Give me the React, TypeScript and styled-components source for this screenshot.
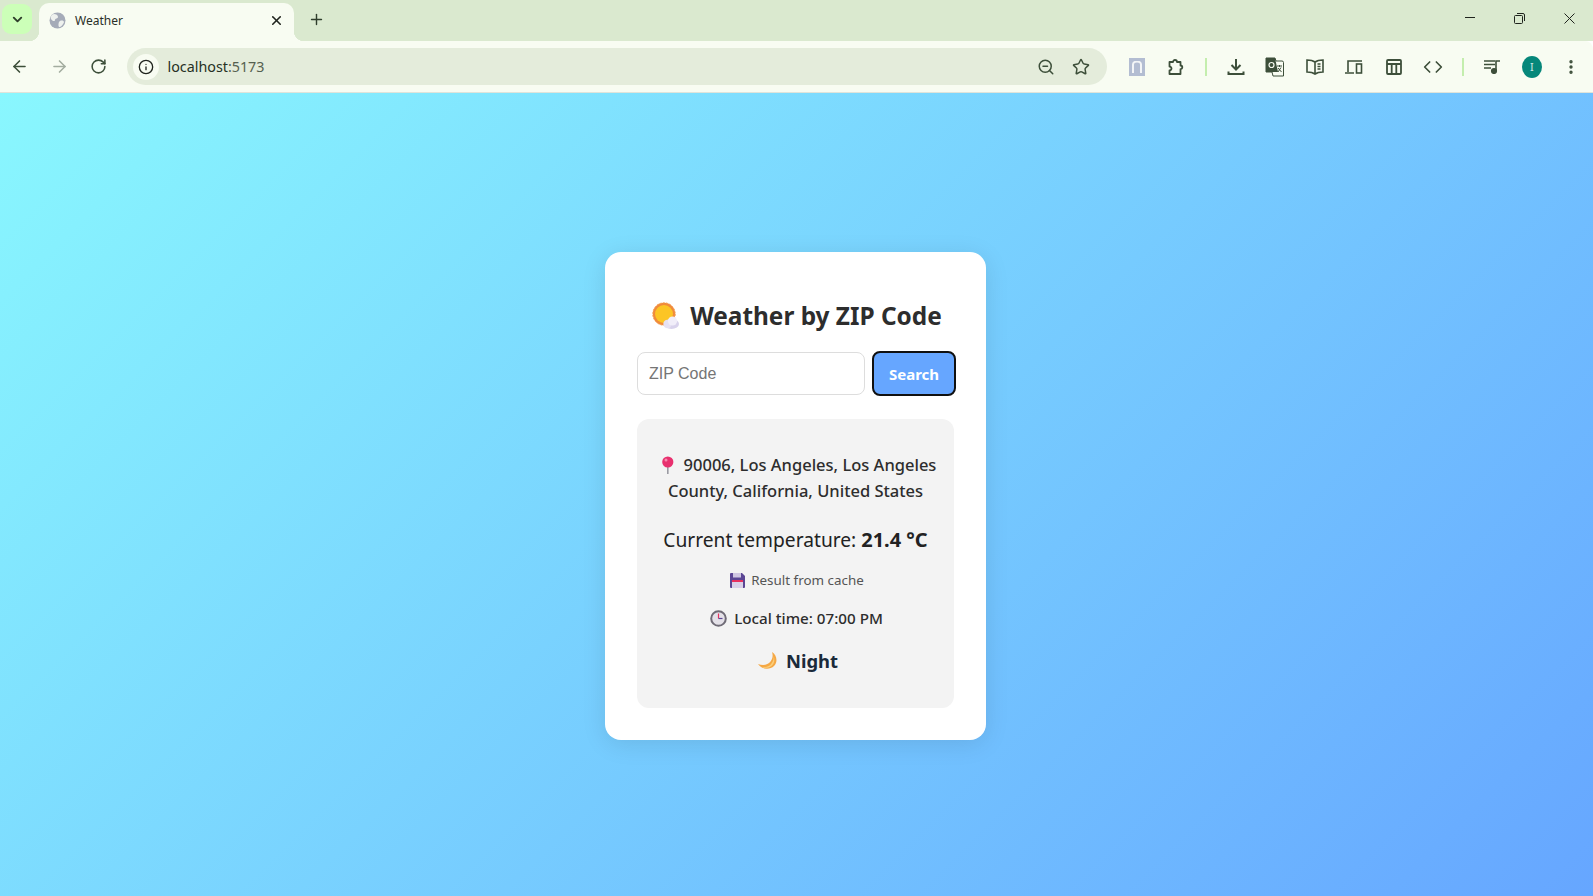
import React from "react";
import styled, { createGlobalStyle } from "styled-components";
import {
  ArrowLeft,
  ArrowRight,
  ChevronDown,
  Code,
  EllipsisVertical,
  Info,
  Plus,
  RotateCw,
  Star,
  X,
  ZoomOut,
} from "lucide-react";

const GlobalStyle = createGlobalStyle`
  html, body {
    margin: 0;
    height: 100%;
    overflow: hidden;
  }
  #root {
    height: 100%;
  }
  * {
    box-sizing: border-box;
  }
`;

const Page = styled.div`
  height: 896px;
  display: flex;
  flex-direction: column;
  font-family: "Noto Sans", "Open Sans", sans-serif;
`;

// Browser chrome
const TabStrip = styled.div`
  height: 41px;
  flex: none;
  background: #dae9cf;
  display: flex;
  align-items: flex-end;
  padding-left: 2px;
  color: #2f3e2c;
`;

const TabMenu = styled.div`
  width: 30px;
  height: 30px;
  margin: 0 7px 7px 0;
  border-radius: 9px;
  background: #ccffb8;
  display: flex;
  align-items: center;
  justify-content: center;
`;

const Tab = styled.div`
  position: relative;
  width: 255px;
  height: 38px;
  background: #f8fcf2;
  border-radius: 10px 10px 0 0;
  display: flex;
  align-items: center;
  padding: 0 10px 3px 10px;
  gap: 9px;
  font: 12px "Noto Sans", sans-serif;
  color: #2a2f28;
  &::before,
  &::after {
    content: "";
    position: absolute;
    bottom: 0;
    width: 10px;
    height: 10px;
  }
  &::before {
    left: -10px;
    background: radial-gradient(circle at 0 0, #dae9cf 10px, #f8fcf2 10.5px);
  }
  &::after {
    right: -10px;
    background: radial-gradient(circle at 100% 0, #dae9cf 10px, #f8fcf2 10.5px);
  }
`;

const TabTitle = styled.span`
  flex: 1;
`;

const NewTab = styled.div`
  width: 24px;
  height: 24px;
  margin: 0 0 10px 10px;
  display: flex;
  align-items: center;
  justify-content: center;
`;

const WindowControls = styled.div`
  margin-left: auto;
  height: 100%;
  display: flex;
  align-items: center;
  gap: 39px;
  padding: 0 18px 5px 0;
  color: #20241e;
`;

const Toolbar = styled.div`
  height: 52px;
  flex: none;
  background: #f8fcf2;
  border-bottom: 1px solid #e0e4da;
  display: flex;
  align-items: center;
  color: #3d4f3a;
  border-radius: 0 8px 0 0;
`;

const NavIcon = styled.div<{ $muted?: boolean }>`
  width: 39.5px;
  height: 24px;
  flex: none;
  display: flex;
  align-items: center;
  justify-content: center;
  color: ${(props) => (props.$muted ? "#a3ada0" : "#3d4f3a")};
`;

const Omnibox = styled.div`
  width: 980px;
  height: 37px;
  margin: 0 10px 0 8px;
  flex: none;
  border-radius: 19px;
  background: #e4ecdb;
  display: flex;
  align-items: center;
  padding: 0 17px 0 6px;
  font: 14.3px "Noto Sans", sans-serif;
  color: #263024;
`;

const SiteInfo = styled.div`
  width: 26px;
  height: 26px;
  border-radius: 50%;
  background: #f8fcf2;
  display: flex;
  align-items: center;
  justify-content: center;
  margin-right: 9px;
  color: #20241e;
`;

const OmniText = styled.span`
  flex: 1;
`;

const OmniPort = styled.span`
  color: #55604f;
`;

const OmniActions = styled.div`
  display: flex;
  align-items: center;
  gap: 17px;
  color: #3d4f3a;
`;

const ExtIcons = styled.div`
  flex: 1;
  display: flex;
  align-items: center;
  padding-left: 1px;
`;

const ExtSlot = styled.div<{ $narrow?: boolean }>`
  width: ${(props) => (props.$narrow ? "19.5px" : "39.5px")};
  flex: none;
  display: flex;
  align-items: center;
  justify-content: center;
`;

const Divider = styled.div`
  width: 2px;
  height: 18px;
  background: #c4eeae;
`;

const NBadge = styled.div`
  width: 16px;
  height: 18px;
  background: #b3bdd2;
  color: #f3f5f7;
  display: flex;
  align-items: center;
  justify-content: center;
`;

const Avatar = styled.div`
  width: 20px;
  height: 22px;
  border-radius: 50%;
  background: #06877a;
  color: #cfe9e4;
  font: 11px "Noto Sans", sans-serif;
  display: flex;
  align-items: center;
  justify-content: center;
`;

// Weather page
const Viewport = styled.main`
  flex: 1;
  background: linear-gradient(135deg, #89f7fe 0%, #66a6ff 100%);
  display: flex;
  align-items: center;
  justify-content: center;
  padding: 3px 2px 0 0;
`;

const Card = styled.div`
  width: 381px;
  height: 488px;
  background: #fff;
  border-radius: 16px;
  box-shadow: 0 4px 24px rgba(0, 0, 0, 0.1);
  padding: 32px;
  text-align: center;
`;

const Title = styled.h1`
  margin: 15px 0 18px;
  padding-left: 3px;
  font-size: 24.4px;
  line-height: 34px;
  font-weight: 700;
  color: #2d2d2d;
  display: flex;
  align-items: center;
  justify-content: center;
  gap: 11px;
`;

const SearchRow = styled.form`
  display: flex;
  align-items: center;
  gap: 7px;
  margin-bottom: 23px;
`;

const ZipInput = styled.input`
  width: 228px;
  height: 43px;
  border: 1px solid #ddd;
  border-radius: 8px;
  padding: 0 11px;
  font: 16px "Liberation Sans", Arial, sans-serif;
  outline: none;
  &::placeholder {
    color: #757575;
  }
`;

const SearchButton = styled.button`
  width: 84px;
  height: 45px;
  flex: none;
  border: 2px solid #101010;
  border-radius: 8px;
  background: #66a6ff;
  color: #fff;
  font: 700 15px "Noto Sans", sans-serif;
  padding: 0;
`;

const Result = styled.section`
  height: 289px;
  background: #f3f3f3;
  border-radius: 12px;
  padding: 33px 16px 0;
`;

const Address = styled.div`
  font-size: 16.5px;
  font-weight: 500;
  line-height: 26px;
  color: #2d2d2d;
`;

const Temperature = styled.div`
  font-size: 19.2px;
  line-height: 28px;
  color: #222;
  margin-top: 22px;
  b {
    font-weight: 700;
    font-size: 20px;
  }
`;

const Cache = styled.div`
  font-size: 13.4px;
  line-height: 20px;
  color: #555;
  margin-top: 16px;
  padding-left: 3px;
  display: flex;
  align-items: center;
  justify-content: center;
  gap: 6px;
`;

const LocalTime = styled.div`
  font-size: 15.2px;
  font-weight: 500;
  line-height: 22px;
  color: #2d2d2d;
  margin-top: 17px;
  padding-left: 2px;
  display: flex;
  align-items: center;
  justify-content: center;
  gap: 7px;
`;

const DayPart = styled.div`
  font-size: 18.4px;
  font-weight: 700;
  line-height: 28px;
  color: #1a2a3a;
  margin-top: 18px;
  padding-left: 5px;
  display: flex;
  align-items: center;
  justify-content: center;
  gap: 9px;
`;

const PinGlyph = styled.svg`
  display: inline-block;
  vertical-align: -3px;
  margin: 0 9px 0 6px;
`;

const Globe = () => (
  <svg width="17" height="17" viewBox="0 0 17 17">
    <circle cx="8.5" cy="8.5" r="8" fill="#a5abb8" />
    <path d="M5 2c2 0 4 1 4 3s-3 1-3 3-3 1-4-1 1-5 3-5zM11 9c2-1 4 0 4 1s-2 4-4 5-2-5 0-6z" fill="#eef1ee" />
  </svg>
);

const SunCloud = () => (
  <svg width="27" height="28" viewBox="0 0 27 28">
    <circle cx="12" cy="12" r="11.2" fill="#f08a3c" strokeDasharray="2 1.2" stroke="#f4a052" strokeWidth="1" />
    <circle cx="12" cy="12" r="9" fill="#fcc525" />
    <ellipse cx="19.500" cy="22" rx="7.500" ry="5" fill="#d9d3ec" />
    <circle cx="15.5" cy="22" r="4.2" fill="#e6e1f3" />
    <circle cx="20.5" cy="19" r="4.6" fill="#f1eef9" />
  </svg>
);

const Pin = () => (
  <PinGlyph width="14" height="18" viewBox="0 0 14 18">
    <rect x="6" y="9" width="1.6" height="9" fill="#9a9aa2" />
    <circle cx="6.8" cy="6" r="5.6" fill="#e8306e" />
    <circle cx="5" cy="4" r="1.5" fill="#f78aae" />
  </PinGlyph>
);

const Floppy = () => (
  <svg width="15" height="15" viewBox="0 0 15 15">
    <path d="M0 1a1 1 0 0 1 1-1h11l3 3v11a1 1 0 0 1-1 1H1a1 1 0 0 1-1-1z" fill="#5b4694" />
    <rect x="3" y="0" width="8" height="4.5" fill="#cfc6e2" />
    <rect x="2" y="7" width="11" height="8" fill="#d9cfe8" />
    <rect x="2" y="7" width="11" height="2" fill="#e8305f" />
  </svg>
);

const Clock = () => (
  <svg width="17" height="17" viewBox="0 0 17 17">
    <circle cx="8.5" cy="8.5" r="7.3" fill="#e4e1e8" stroke="#6f6b76" strokeWidth="2" />
    <path d="M8.5 3.5v5" stroke="#e8305f" strokeWidth="1.2" />
    <path d="M8.5 8.5h4" stroke="#5b4694" strokeWidth="1.2" />
  </svg>
);

const Moon = () => (
  <svg width="19" height="18" viewBox="0 0 19 18">
    <path d="M14 0c5 3 6 10 2 14s-12 4-16-2c5 2 10 1 12.500-2.500S15 3 14 0z" fill="#f5a845" />
    <path d="M15.500 4c1.500 3.500 1 7-1.500 9.500s-7 3-10 1.500c3.500.5 7.500-.5 9.500-3.500s2.500-4.500 2-7.500z" fill="#fbd07a" />
  </svg>
);

const PuzzleIcon = () => (
  <svg width="17" height="18" viewBox="0 0 17 18" fill="none" stroke="#3d4f3a" strokeWidth="1.800" strokeLinejoin="round">
    <path d="M1.500 4h3.500a2 2 0 0 1 4 0h3.500v3.500a1.800 1.800 0 0 1 0 3.600V16h-11v-3.500a2 2 0 0 0 0-4z" />
  </svg>
);

const DownloadIcon = () => (
  <svg width="18" height="18" viewBox="0 0 18 18" fill="none" stroke="#3d4f3a" strokeWidth="2">
    <path d="M9 1v10M4.500 7l4.500 4.500L13.500 7" />
    <path d="M1.500 13.500v2.500h15v-2.500" />
  </svg>
);

const TranslateIcon = () => (
  <svg width="20" height="20" viewBox="0 0 20 20">
    <path d="M1 1h9l1 3h6a1.500 1.500 0 0 1 1.500 1.500V19H8l-1-4H1z" fill="#f8fcf2" stroke="#3d4f3a" strokeWidth="1" />
    <path d="M1 1h9l3 14H1z" fill="#3d4f3a" />
    <circle cx="6.500" cy="8" r="2.500" fill="none" stroke="#f8fcf2" strokeWidth="1.200" />
    <path d="M12 9h5M14.500 8v2M13 15l3-4.500M13 11l3.500 4" stroke="#3d4f3a" strokeWidth="1" fill="none" />
  </svg>
);

const ReaderIcon = () => (
  <svg width="18" height="16" viewBox="0 0 18 16" fill="none" stroke="#3d4f3a" strokeWidth="1.600">
    <path d="M9 3C7 1.500 4 1 1 1v12c3 0 6 .5 8 2 2-1.500 5-2 8-2V1c-3 0-6 .5-8 2zM9 3v12" />
    <path d="M11.500 5h3M11.500 7.500h3M11.500 10h3" />
  </svg>
);

const DevicesIcon = () => (
  <svg width="18" height="16" viewBox="0 0 18 16" fill="none" stroke="#3d4f3a" strokeWidth="1.600">
    <path d="M3 13V2h14M0 14h9" />
    <rect x="11.500" y="5" width="5" height="9" />
  </svg>
);

const TableIcon = () => (
  <svg width="16" height="16" viewBox="0 0 16 16" fill="none" stroke="#3d4f3a" strokeWidth="1.800">
    <rect x="1" y="1" width="14" height="14" rx="1" />
    <path d="M1 5h14M5.700 5v10M10.300 5v10" />
  </svg>
);

const QueueIcon = () => (
  <svg width="17" height="14" viewBox="0 0 17 14" fill="none" stroke="#3d4f3a" strokeWidth="1.600">
    <path d="M0 1h11M0 4.500h11M0 8h7" />
    <path d="M12 11V1h4" />
    <circle cx="10" cy="11" r="2.300" fill="#3d4f3a" />
  </svg>
);

const RestoreIcon = () => (
  <svg width="11" height="11" viewBox="0 0 11 11" fill="none" stroke="currentColor" strokeWidth="1">
    <rect x="0.500" y="2.500" width="8" height="8" rx="1" />
    <path d="M3 .5h6a1.500 1.500 0 0 1 1.500 1.500v6" />
  </svg>
);

const CloseIcon = () => (
  <svg width="11" height="11" viewBox="0 0 11 11" fill="none" stroke="currentColor" strokeWidth="1">
    <path d="M.5.5l10 10M10.500.5l-10 10" />
  </svg>
);

const App: React.FC = () => {
  return (
    <>
      <GlobalStyle />
      <Page>
        <TabStrip>
          <TabMenu>
            <ChevronDown size={15} strokeWidth={3} />
          </TabMenu>
          <Tab>
            <Globe />
            <TabTitle>Weather</TabTitle>
            <X size={15} strokeWidth={2.5} color="#20241e" />
          </Tab>
          <NewTab>
            <Plus size={17} strokeWidth={2} />
          </NewTab>
          <WindowControls>
            <svg width="10" height="2" viewBox="0 0 10 2">
              <rect width="10" height="1" fill="currentColor" />
            </svg>
            <RestoreIcon />
            <CloseIcon />
          </WindowControls>
        </TabStrip>
        <Toolbar>
          <NavIcon>
            <ArrowLeft size={19} strokeWidth={2} />
          </NavIcon>
          <NavIcon $muted>
            <ArrowRight size={19} strokeWidth={2} />
          </NavIcon>
          <NavIcon>
            <RotateCw size={17} strokeWidth={2.2} />
          </NavIcon>
          <Omnibox>
            <SiteInfo>
              <Info size={16} strokeWidth={2} />
            </SiteInfo>
            <OmniText>
              localhost<OmniPort>:5173</OmniPort>
            </OmniText>
            <OmniActions>
              <ZoomOut size={18} strokeWidth={2} />
              <Star size={18} strokeWidth={2} />
            </OmniActions>
          </Omnibox>
          <ExtIcons>
            <ExtSlot>
              <NBadge>
                <svg width="10" height="12" viewBox="0 0 10 12" fill="none" stroke="currentColor" strokeWidth="2">
                  <path d="M1 12V3.500a4 3 0 0 1 8 0V12" />
                </svg>
              </NBadge>
            </ExtSlot>
            <ExtSlot>
              <PuzzleIcon />
            </ExtSlot>
            <ExtSlot $narrow>
              <Divider />
            </ExtSlot>
            <ExtSlot>
              <DownloadIcon />
            </ExtSlot>
            <ExtSlot>
              <TranslateIcon />
            </ExtSlot>
            <ExtSlot>
              <ReaderIcon />
            </ExtSlot>
            <ExtSlot>
              <DevicesIcon />
            </ExtSlot>
            <ExtSlot>
              <TableIcon />
            </ExtSlot>
            <ExtSlot>
              <Code size={20} strokeWidth={2} />
            </ExtSlot>
            <ExtSlot $narrow>
              <Divider />
            </ExtSlot>
            <ExtSlot>
              <QueueIcon />
            </ExtSlot>
            <ExtSlot>
              <Avatar>I</Avatar>
            </ExtSlot>
            <ExtSlot>
              <EllipsisVertical size={18} strokeWidth={2.5} />
            </ExtSlot>
          </ExtIcons>
        </Toolbar>
        <Viewport>
          <Card>
            <Title>
              <SunCloud />
              Weather by ZIP Code
            </Title>
            <SearchRow>
              <ZipInput placeholder="ZIP Code" />
              <SearchButton type="button">Search</SearchButton>
            </SearchRow>
            <Result>
              <Address>
                <Pin />
                90006, Los Angeles, Los Angeles County, California, United States
              </Address>
              <Temperature>
                Current temperature: <b>21.4 °C</b>
              </Temperature>
              <Cache>
                <Floppy />
                Result from cache
              </Cache>
              <LocalTime>
                <Clock />
                Local time: 07:00 PM
              </LocalTime>
              <DayPart>
                <Moon />
                Night
              </DayPart>
            </Result>
          </Card>
        </Viewport>
      </Page>
    </>
  );
};

export default App;
